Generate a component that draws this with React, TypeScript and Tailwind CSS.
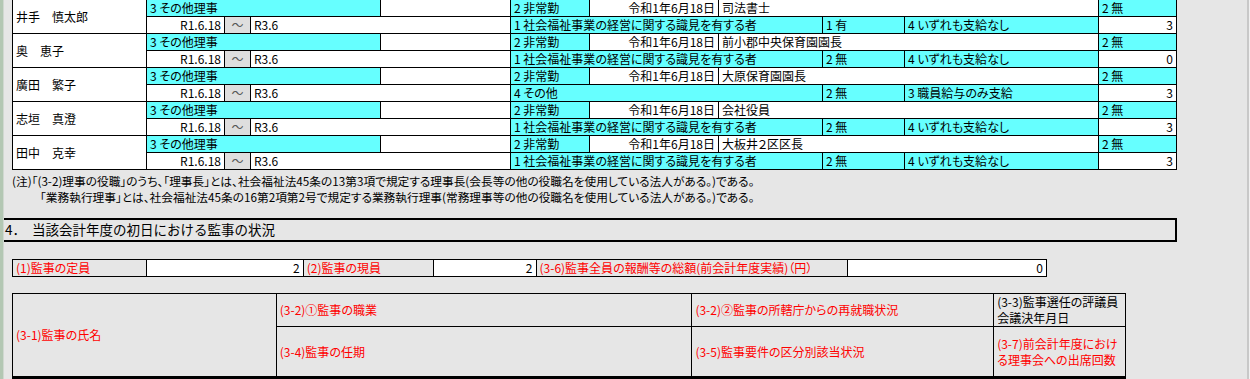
import React from "react";

interface Officer {
  name: string;
  job: string;
  qualification: string;
  related: string;
  pay: string;
  attended: number;
}

const officers: Officer[] = [
  { name: "井手　慎太郎", job: "司法書士", qualification: "1 社会福祉事業の経営に関する識見を有する者", related: "1 有", pay: "4 いずれも支給なし", attended: 3 },
  { name: "奥　恵子", job: "前小郡中央保育園園長", qualification: "1 社会福祉事業の経営に関する識見を有する者", related: "2 無", pay: "4 いずれも支給なし", attended: 0 },
  { name: "廣田　繁子", job: "大原保育園園長", qualification: "4 その他", related: "2 無", pay: "3 職員給与のみ支給", attended: 3 },
  { name: "志垣　真澄", job: "会社役員", qualification: "1 社会福祉事業の経営に関する識見を有する者", related: "2 無", pay: "4 いずれも支給なし", attended: 3 },
  { name: "田中　克幸", job: "大板井２区区長", qualification: "1 社会福祉事業の経営に関する識見を有する者", related: "2 無", pay: "4 いずれも支給なし", attended: 3 },
];

function Cell({ className = "", children }: { className?: string; children?: React.ReactNode }) {
  return (
    <div className={`h-full border-r border-black flex items-center px-[3px] whitespace-nowrap overflow-hidden ${className}`}>
      {children}
    </div>
  );
}

function OfficerBlock({ o }: { o: Officer }) {
  return (
    <div className="flex h-[34px] border-b border-black">
      <Cell className="w-[134px] bg-white">{o.name}</Cell>
      <div className="flex flex-col">
        <div className="flex h-[17px] border-b border-black">
          <Cell className="w-[234px] bg-[#66ffff]">3 その他理事</Cell>
          <Cell className="w-[130px] bg-white" />
          <Cell className="w-[79px] bg-[#66ffff]">2 非常勤</Cell>
          <Cell className="w-[129px] bg-white justify-end">令和1年6月18日</Cell>
          <Cell className="w-[380px] bg-white">{o.job}</Cell>
          <Cell className="w-[78px] bg-[#66ffff]">2 無</Cell>
        </div>
        <div className="flex h-[16px]">
          <Cell className="w-[78px] bg-white justify-end">R1.6.18</Cell>
          <Cell className="w-[26px] bg-[#dedede] justify-center text-[#555]">～</Cell>
          <Cell className="w-[260px] bg-white">R3.6</Cell>
          <Cell className="w-[312px] bg-[#66ffff]">{o.qualification}</Cell>
          <Cell className="w-[82px] bg-[#66ffff]">{o.related}</Cell>
          <Cell className="w-[194px] bg-[#66ffff]">{o.pay}</Cell>
          <Cell className="w-[78px] bg-white justify-end">{o.attended}</Cell>
        </div>
      </div>
    </div>
  );
}

export default function App() {
  return (
    <div className="w-[1250px] h-[379px] overflow-hidden bg-[#e6e6e6] flex font-['Noto_Sans_CJK_JP',sans-serif] [font-feature-settings:'palt'] text-black text-[12px] leading-none">
      <div className="w-[4px] h-full bg-[#b3c7b3] border-r border-[#d0d8d0]" />
      <div className="flex-1 flex flex-col">
        {/* 理事一覧 */}
        <div className="ml-[8px] mt-[-1px] w-[1165px] border-l border-t border-black">
          {officers.map((o) => (
            <OfficerBlock key={o.name} o={o} />
          ))}
        </div>

        <div className="ml-[8px] mt-[3px] text-[11.7px] leading-[16px]">
          <p>(注)「(3-2)理事の役職」のうち、「理事長」とは、社会福祉法45条の13第3項で規定する理事長(会長等の他の役職名を使用している法人がある。)である。</p>
          <p className="pl-[28px]">「業務執行理事」とは、社会福祉法45条の16第2項第2号で規定する業務執行理事(常務理事等の他の役職名を使用している法人がある。)である。</p>
        </div>

        <div className="mt-[13px] w-[1173px] h-[24px] border-t-2 border-b-2 border-r-2 border-black flex items-center pl-[1px] text-[13.5px] [font-feature-settings:normal]">
          <span className="mr-[6px]">4．</span>当該会計年度の初日における監事の状況
        </div>

        <div className="ml-[8px] mt-[17px] flex h-[18px] w-[1035px] border border-black">
          <Cell className="w-[134px] text-[#ff0000]">(1)監事の定員</Cell>
          <Cell className="w-[157px] bg-white justify-end">2</Cell>
          <Cell className="w-[130px] text-[#ff0000]">(2)監事の現員</Cell>
          <Cell className="w-[103px] bg-white justify-end">2</Cell>
          <Cell className="w-[312px] text-[#ff0000]">(3-6)監事全員の報酬等の総額(前会計年度実績)（円）</Cell>
          <Cell className="w-[198px] bg-white justify-end border-r-0">0</Cell>
        </div>

        <div className="ml-[8px] mt-[16px] flex w-[1114px] h-[86px] border-l border-t border-b-[3px] border-black">
          <Cell className="w-[264px] text-[#ff0000]">(3-1)監事の氏名</Cell>
          <div className="flex flex-col w-[416px] border-r border-black">
            <div className="h-[33px] border-b border-black flex items-center px-[3px] text-[#ff0000]">(3-2)①監事の職業</div>
            <div className="flex-1 flex items-center px-[3px] text-[#ff0000]">(3-4)監事の任期</div>
          </div>
          <div className="flex flex-col w-[302px] border-r border-black">
            <div className="h-[33px] border-b border-black flex items-center px-[3px] text-[#ff0000]">(3-2)②監事の所轄庁からの再就職状況</div>
            <div className="flex-1 flex items-center px-[3px] text-[#ff0000]">(3-5)監事要件の区分別該当状況</div>
          </div>
          <div className="flex flex-col w-[132px] border-r border-black">
            <div className="h-[33px] border-b border-black flex items-center px-[3px] leading-[16px]">(3-3)監事選任の評議員<br />会議決年月日</div>
            <div className="flex-1 flex items-center px-[3px] leading-[16px] text-[#ff0000]">(3-7)前会計年度におけ<br />る理事会への出席回数</div>
          </div>
        </div>
      </div>
      <div className="w-[2px] h-full bg-[#c8c8c8]" />
      <div className="w-[1px] h-full bg-[#f0f0f0]" />
    </div>
  );
}
